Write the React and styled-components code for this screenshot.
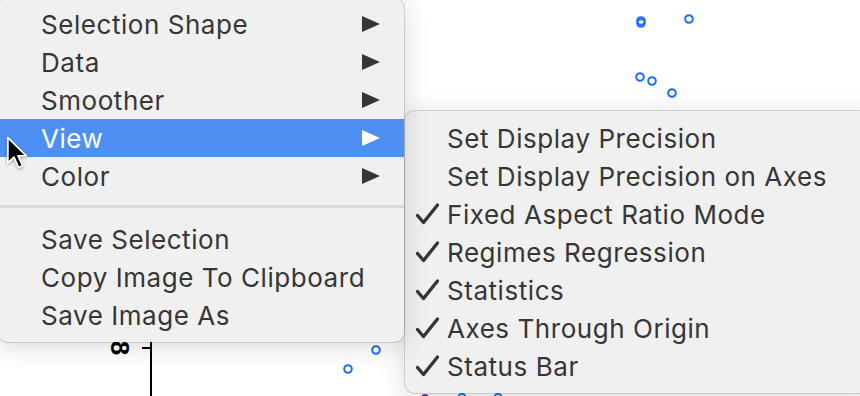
import React from 'react'
import styled, { createGlobalStyle } from 'styled-components'

const GlobalStyle = createGlobalStyle`
  html, body {
    margin: 0;
    padding: 0;
    background: #fff;
    overflow: hidden;
  }
`

const Stage = styled.div`
  position: relative;
  width: 860px;
  height: 396px;
  overflow: hidden;
  background: #fff;
  font-family: Inter, "Liberation Sans", sans-serif;
`

const Plot = styled.svg`
  position: absolute;
  left: 0;
  top: 0;
`

const Menu = styled.div`
  position: absolute;
  left: ${p => p.left}px;
  top: ${p => p.top}px;
  width: ${p => p.width}px;
  padding: ${p => p.pad};
  background: #f0f0f0;
  border-radius: 10px;
  box-shadow: 0 0 0 1px rgba(0, 0, 0, 0.13), 0 4px 26px rgba(0, 0, 0, 0.16);
  display: flex;
  flex-direction: column;
`

const Item = styled.div`
  height: 38px;
  display: flex;
  align-items: center;
  padding-left: ${p => p.indent}px;
  padding-right: 24px;
  font-size: 26px;
  letter-spacing: 0.55px;
  color: ${p => (p.active ? '#fff' : '#363636')};
  background: ${p => (p.active ? '#4e8ff4' : 'transparent')};
  white-space: nowrap;
`

const Label = styled.span`
  flex: 1;
`

const Check = styled.span`
  width: 31px;
  display: flex;
  align-items: center;
`

const Separator = styled.div`
  height: 3px;
  margin: 10px 0 12px;
  background: #dadada;
`

const Arrow = ({ light }) => (
  <svg width="18" height="16" viewBox="0 0 18 16">
    <path d="M0 0 L18 8 L0 16 Z" fill={light ? '#fff' : '#363636'} />
  </svg>
)

const CheckMark = () => (
  <svg width="23" height="22" viewBox="0 0 23 22">
    <path
      d="M1.5 12.5 L7.5 19.5 L21.5 2"
      fill="none"
      stroke="#363636"
      strokeWidth="3.4"
      strokeLinecap="round"
      strokeLinejoin="round"
    />
  </svg>
)

const Cursor = styled.svg`
  position: absolute;
  left: 6px;
  top: 136px;
  filter: drop-shadow(0 1px 1.5px rgba(0, 0, 0, 0.35));
`

const mainTop = ['Selection Shape', 'Data', 'Smoother', 'View', 'Color']
const mainBottom = ['Save Selection', 'Copy Image To Clipboard', 'Save Image As']
const viewItems = [
  { label: 'Set Display Precision', checked: false },
  { label: 'Set Display Precision on Axes', checked: false },
  { label: 'Fixed Aspect Ratio Mode', checked: true },
  { label: 'Regimes Regression', checked: true },
  { label: 'Statistics', checked: true },
  { label: 'Axes Through Origin', checked: true },
  { label: 'Status Bar', checked: true },
]
const points = [
  [641, 23], [641, 21], [689, 19], [640, 77], [652, 81], [672, 93], [376, 350], [348, 369],
]

export default function App() {
  return (
    <Stage>
      <GlobalStyle />
      <Plot width="860" height="396" viewBox="0 0 860 396">
        <line x1="151" y1="340" x2="151" y2="396" stroke="#000" strokeWidth="2" />
        <line x1="142" y1="348" x2="151" y2="348" stroke="#000" strokeWidth="2" />
        <text
          x="0"
          y="0"
          transform="translate(120 348) rotate(90)"
          textAnchor="middle"
          dominantBaseline="central"
          fontSize="26"
          fontWeight="bold"
          fontFamily="Liberation Sans, sans-serif"
          fill="#000"
        >
          8
        </text>
        {points.map(([x, y], i) => (
          <circle key={i} cx={x} cy={y} r="3.8" fill="none" stroke="#1a6ef0" strokeWidth="2" />
        ))}
        <circle cx="425" cy="398" r="4" fill="#6b2fa8" />
        <circle cx="462" cy="398" r="4" fill="none" stroke="#1a6ef0" strokeWidth="2" />
        <circle cx="498" cy="398" r="4" fill="none" stroke="#1a6ef0" strokeWidth="2" />
      </Plot>

      <Menu left={405} top={111} width={470} pad="8px 0">
        {viewItems.map(it => (
          <Item key={it.label} indent={11}>
            <Check>{it.checked && <CheckMark />}</Check>
            <Label>{it.label}</Label>
          </Item>
        ))}
      </Menu>

      <Menu left={-2} top={-2} width={406} pad="7px 0 8px">
        {mainTop.map(label => (
          <Item key={label} indent={43} active={label === 'View'}>
            <Label>{label}</Label>
            <Arrow light={label === 'View'} />
          </Item>
        ))}
        <Separator />
        {mainBottom.map(label => (
          <Item key={label} indent={43}>
            <Label>{label}</Label>
          </Item>
        ))}
      </Menu>

      <Cursor width="25" height="36" viewBox="0 0 22 32">
        <path
          d="M1.5 1.5 L1.5 24 L7 18.8 L11 28 L14.6 26.4 L10.7 17.6 L18 17.6 Z"
          fill="#000"
          stroke="#fff"
          strokeWidth="1.6"
          strokeLinejoin="round"
        />
      </Cursor>
    </Stage>
  )
}
